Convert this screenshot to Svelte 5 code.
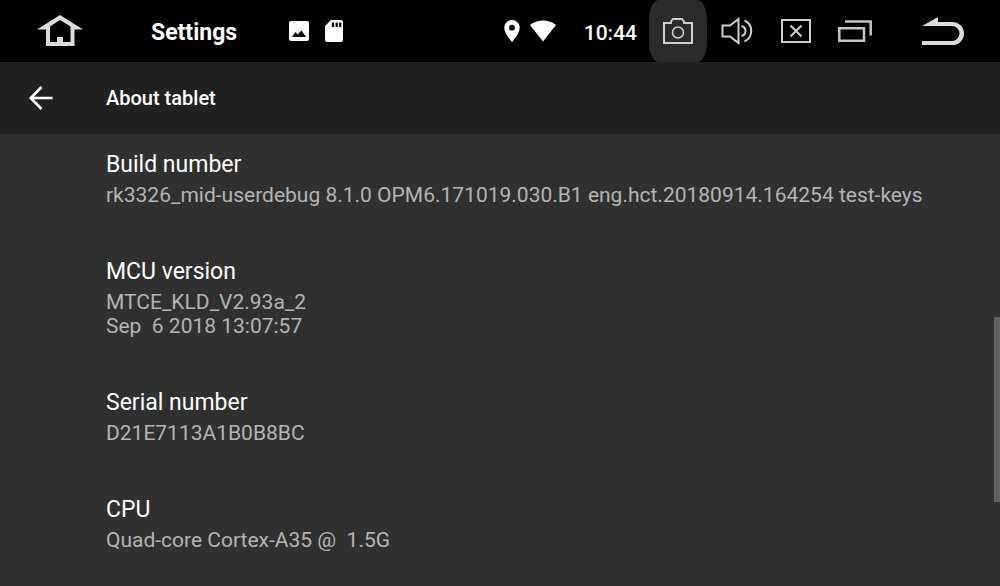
<script>
  const items = [
    {
      title: "Build number",
      lines: ["rk3326_mid-userdebug 8.1.0 OPM6.171019.030.B1 eng.hct.20180914.164254 test-keys"],
    },
    {
      title: "MCU version",
      lines: ["MTCE_KLD_V2.93a_2", "Sep  6 2018 13:07:57"],
    },
    { title: "Serial number", lines: ["D21E7113A1B0B8BC"] },
    { title: "CPU", lines: ["Quad-core Cortex-A35 @  1.5G"] },
  ];
</script>

<div class="screen">
  <header class="status-bar">
    <button class="nav wide" aria-label="Home">
      <svg width="46" height="32" viewBox="0 0 46 32">
        <path
          fill="#dcdcdc"
          fill-rule="evenodd"
          d="M23 0 46 14.5H37.5V31H9V14.5H0ZM23 5 13 11.5V27H20V22H26V27H33.500V11.5Z"
        />
      </svg>
    </button>

    <span class="app-name">Settings</span>

    <div class="notifications">
      <svg width="20" height="22" viewBox="0 0 20 22">
        <rect y="1" width="20" height="20" rx="2" fill="#fff" />
        <path fill="#000" d="M3 17 6.500 12 8.500 14.500 12.500 10.500 17 17Z" />
      </svg>
      <svg width="18" height="22" viewBox="0 0 18 22">
        <path
          fill="#fff"
          d="M6 0H16A2 2 0 0 1 18 2V20A2 2 0 0 1 16 22H2A2 2 0 0 1 0 20V6Z"
        />
        <path stroke="#000" stroke-width="2.200" d="M8 2.500V7M11.700 2.500V7M15.200 2.500V7" />
      </svg>
    </div>

    <div class="indicators">
      <svg width="16" height="22" viewBox="0 0 16 22">
        <path
          fill="#fff"
          fill-rule="evenodd"
          d="M8 0A7.700 7.700 0 0 1 15.700 7.700C15.700 13.500 8 22 8 22S.300 13.500.300 7.700A7.700 7.700 0 0 1 8 0ZM8 4.800A2.900 2.900 0 1 0 8 10.600A2.900 2.900 0 1 0 8 4.800Z"
        />
      </svg>
      <svg width="26" height="22" viewBox="0 0 26 22">
        <path fill="#fff" d="M13 21.500 0 5Q5.500.500 13 .500T26 5Z" />
      </svg>
    </div>

    <time class="clock">10:44</time>

    <nav>
      <button class="nav active" aria-label="Screenshot">
        <svg width="30" height="26" viewBox="0 0 30 26" fill="none" stroke="#cfcfcf">
          <path stroke-width="2" d="M1 5H8V3.500L10 1H19L21 3.500V5H29V25H1Z" />
          <circle cx="15" cy="14.500" r="5.500" stroke-width="1.500" />
        </svg>
      </button>
      <button class="nav" aria-label="Volume">
        <svg width="32" height="28" viewBox="0 0 32 28" fill="none" stroke="#cfcfcf" stroke-width="2">
          <path d="M1.500 8.500H9L17.500 2V26L9 19.500H1.500Z" />
          <path d="M20.500 9Q24.500 10 24.500 14T20.500 19" />
          <path d="M23.500 3.500C32.500 7.500 32.500 20 23.500 24.500" />
        </svg>
      </button>
      <button class="nav" aria-label="Close app">
        <svg width="30" height="24" viewBox="0 0 30 24" fill="none" stroke="#cfcfcf" stroke-width="2">
          <path d="M1 1H29V23H1Z" />
          <path d="M9.500 6.500 20.500 17.500M20.500 6.500 9.500 17.500" />
        </svg>
      </button>
      <button class="nav" aria-label="Recent apps">
        <svg width="34" height="22" viewBox="0 0 34 22" fill="none" stroke="#c4c4c4">
          <path stroke-width="2.500" d="M1.300 8.300H26V20.700H1.300Z" />
          <path stroke-width="2.500" d="M7 1.500H32.700V15.500" />
        </svg>
      </button>
      <button class="nav wide" aria-label="Back">
        <svg width="42" height="28" viewBox="0 0 42 28">
          <path
            fill="#dcdcdc"
            d="M0 9 16 0V5H30.500A11.500 11.500 0 0 1 30.500 28H0V24H30A7.500 7.500 0 0 0 30 9Z"
          />
        </svg>
      </button>
    </nav>
  </header>

  <div class="toolbar">
    <button class="back" aria-label="Navigate up">
      <svg width="24" height="24" viewBox="0 0 24 24" fill="none" stroke="#fff" stroke-width="2.600">
        <path d="M23.500 12H2M12.500 1 1.800 12 12.500 23" />
      </svg>
    </button>
    <h1>About tablet</h1>
  </div>

  <main>
    {#each items as item}
      <section>
        <h2>{item.title}</h2>
        {#each item.lines as line}
          <p>{line}</p>
        {/each}
      </section>
    {/each}
    <div class="scroll-thumb"></div>
  </main>
</div>

<style>
  :global(body) {
    background: #303030;
  }

  .screen {
    display: flex;
    flex-direction: column;
    height: 100vh;
    overflow: hidden;
    font-family: Roboto, sans-serif;
    color: #fff;
  }

  button {
    display: flex;
    align-items: center;
    justify-content: center;
    padding: 0;
    border: none;
    background: none;
  }

  svg {
    display: block;
  }

  .status-bar {
    display: flex;
    flex-shrink: 0;
    align-items: center;
    height: 62px;
    padding-left: 2px;
    background: #000;
  }

  .nav {
    width: 58px;
    height: 62px;
  }

  .nav.wide {
    width: 115px;
  }

  .nav.active {
    background: #2b2b2b;
    border-radius: 10px / 20px;
  }

  .app-name,
  .clock {
    padding-top: 3px;
    font-size: 23px;
    font-weight: 700;
    line-height: 28px;
  }

  .app-name {
    margin-left: 34px;
  }

  .notifications {
    display: flex;
    gap: 16px;
    margin-left: 52px;
  }

  .indicators {
    display: flex;
    gap: 10px;
    margin-left: auto;
  }

  .clock {
    margin: 0 12px 0 28px;
    font-size: 21px;
    font-weight: 500;
  }

  nav {
    display: flex;
    gap: 1px;
  }

  .toolbar {
    display: flex;
    flex-shrink: 0;
    align-items: center;
    height: 72px;
    background: #212121;
    border-bottom: 1px solid #292929;
  }

  .back {
    width: 82px;
    height: 72px;
  }

  h1 {
    margin: 0 0 0 24px;
    font-size: 20px;
    font-weight: 500;
    line-height: 28px;
  }

  main {
    position: relative;
    flex: 1;
    min-height: 0;
    padding: 16px 24px 0 106px;
  }

  section {
    margin-bottom: 51px;
  }

  h2 {
    margin: 0 0 4px;
    font-size: 23px;
    font-weight: 400;
    line-height: 28px;
  }

  p {
    margin: 0;
    font-size: 21px;
    line-height: 24px;
    color: #b4b4b4;
    white-space: pre-wrap;
  }

  .scroll-thumb {
    position: absolute;
    top: 182px;
    right: 0;
    width: 6px;
    height: 41%;
    background: #606060;
  }
</style>
